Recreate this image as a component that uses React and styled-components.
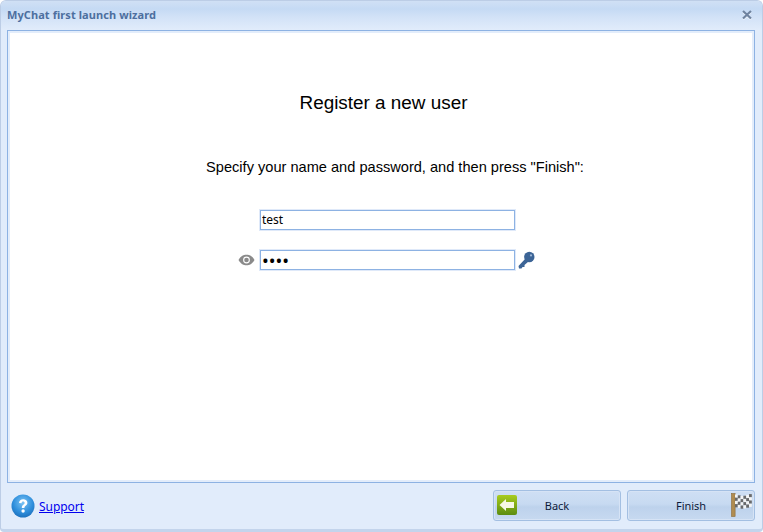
import React from "react";
import styled, { createGlobalStyle } from "styled-components";

const Global = createGlobalStyle`
  html, body { margin: 0; padding: 0; width: 763px; height: 532px; overflow: hidden; background: #fff; }
  #root { width: 763px; height: 532px; }
`;

const Window = styled.div`
  box-sizing: border-box;
  width: 763px;
  height: 532px;
  display: flex;
  flex-direction: column;
  background: #e1ecfb;
  border: 1px solid #bccde6;
  border-bottom: 3px solid #c3d4ec;
  border-radius: 6px 6px 4px 4px;
  padding: 0 7px 0 6px;
  overflow: hidden;
`;

const TitleBar = styled.div`
  height: 29px;
  margin: 0 -7px 0 -6px;
  padding: 0 10px 0 6px;
  flex: none;
  display: flex;
  align-items: flex-start;
  justify-content: space-between;
  background: linear-gradient(#d0e0f5 0, #c5daf4 8px, #d2e2f7 16px, #e1ecfb 29px);
`;

const Title = styled.span`
  margin-top: 7px;
  font: bold 11px/14px "Noto Sans", "DejaVu Sans", sans-serif;
  letter-spacing: 0.08px;
  color: #4d6f9f;
`;

const CloseIcon = styled.svg`
  width: 10px;
  height: 10px;
  margin-top: 9px;
  display: block;
`;

const Panel = styled.main`
  flex: none;
  box-sizing: border-box;
  height: 453px;
  background: #fff;
  border: 1px solid #8db2e3;
  box-shadow: inset 0 0 0 2px #e3edfb;
  display: flex;
  flex-direction: column;
  align-items: center;
  padding-top: 61px;
`;

const Heading = styled.h1`
  margin: 0 0 0 5px;
  font: 400 18.9px/22px "Liberation Sans", Arial, sans-serif;
  color: #000;
`;

const Prompt = styled.p`
  margin: 44px 0 0 28px;
  font: 400 14.6px/18px "Liberation Sans", Arial, sans-serif;
  color: #000;
`;

const Form = styled.div`
  margin: 34px 0 0 13px;
  display: flex;
  flex-direction: column;
  gap: 20px;
`;

const FieldRow = styled.div`
  position: relative;
  width: 255px;
  height: 20px;
`;

const Input = styled.input`
  box-sizing: border-box;
  width: 255px;
  height: 20px;
  display: block;
  padding: 0 1px 1px;
  margin: 0;
  border: 1px solid #8db2e3;
  border-radius: 0;
  outline: none;
  box-shadow: 0 0 0 1px #dfe9f9;
  background: #fff;
  color: #000;
  font: 400 ${(p) => (p.type === "password" ? "18px" : "12px")}/17px "Noto Sans", "DejaVu Sans", sans-serif;
`;

const SideIcon = styled.svg`
  position: absolute;
  top: 1px;
  display: block;
  ${(p) => (p.$side === "left" ? "left: -22px;" : "right: -21px;")}
`;

const Footer = styled.footer`
  flex: 1;
  display: flex;
  align-items: flex-start;
  justify-content: space-between;
  padding-top: 7px;
`;

const SupportWrap = styled.div`
  display: flex;
  align-items: center;
  gap: 4px;
  margin: 4px 0 0 4px;
`;

const SupportLink = styled.a`
  margin-top: 2px;
  font: 400 12px/16px "Noto Sans", "DejaVu Sans", sans-serif;
  letter-spacing: -0.05px;
  color: #0000ee;
  text-decoration: underline;
  cursor: pointer;
`;

const Buttons = styled.div`
  display: flex;
  gap: 6px;
`;

const Button = styled.button`
  position: relative;
  box-sizing: border-box;
  width: 128px;
  height: 31px;
  padding: 0;
  border: 1px solid #a3bfe2;
  border-radius: 3px;
  background: linear-gradient(#cfdff4 0, #c7daf1 45%, #bdd2ec 55%, #c7d9f0 100%);
  box-shadow: inset 0 0 0 1px #d6e3f5;
  font: 400 11px/29px "Noto Sans", "DejaVu Sans", sans-serif;
  letter-spacing: -0.05px;
  color: #0c1a3a;
  text-align: center;
`;

const ButtonIcon = styled.svg`
  position: absolute;
  display: block;
  top: ${(p) => p.$top}px;
  ${(p) => (p.$side === "left" ? `left: ${p.$inset}px;` : `right: ${p.$inset}px;`)}
`;

const FlagSquares = () => {
  const cells = [];
  const wave = [0, 0.8, 1.4, 1.2, 0.4, -0.4];
  for (let r = 0; r < 4; r++) {
    for (let c = 0; c < 6; c++) {
      cells.push(
        <rect
          key={`${r}-${c}`}
          x={4 + c * 2.8}
          y={1.5 + r * 3.2 + wave[c]}
          width="2.8"
          height="3.2"
          fill={(r + c) % 2 ? "#6a6a6a" : "#f4f4f4"}
        />
      );
    }
  }
  return cells;
};

export default function App() {
  return (
    <Window>
      <Global />
      <TitleBar>
        <Title>MyChat first launch wizard</Title>
        <CloseIcon viewBox="0 0 10 10">
          <path d="M1 2 L9 9.5 M9 2 L1 9.5" stroke="#fff" strokeWidth="2" fill="none" opacity="0.7" />
          <path d="M1 1 L9 8.5 M9 1 L1 8.5" stroke="#6f839f" strokeWidth="2.2" fill="none" />
        </CloseIcon>
      </TitleBar>
      <Panel>
        <Heading>Register a new user</Heading>
        <Prompt>Specify your name and password, and then press "Finish":</Prompt>
        <Form>
          <FieldRow>
            <Input type="text" defaultValue="test" />
          </FieldRow>
          <FieldRow>
            <SideIcon $side="left" width="17" height="18" viewBox="0 0 17 18">
              <path d="M0.5 9 C3 4.8 5.5 3.8 8.5 3.8 C11.5 3.8 14 4.8 16.5 9 C14 13.2 11.5 14.2 8.5 14.2 C5.5 14.2 3 13.2 0.5 9 Z" fill="#8a8a8a" />
              <circle cx="8.5" cy="9" r="3.4" fill="#fff" />
              <circle cx="8.5" cy="9" r="2.3" fill="#8a8a8a" />
            </SideIcon>
            <Input type="password" defaultValue="test" />
            <SideIcon $side="right" width="18" height="18" viewBox="0 0 18 18">
              <path d="M0.5 15 L7.5 7.5 L10.5 10.5 L6.5 14 L6.5 16 L4.5 16 L3.5 17.5 L1 17.5 Z" fill="#3c6496" />
              <circle cx="11.3" cy="6" r="5.2" fill="#3c6496" />
              <circle cx="13" cy="4.4" r="1.1" fill="#9db6d6" />
            </SideIcon>
          </FieldRow>
        </Form>
      </Panel>
      <Footer>
        <SupportWrap>
          <svg width="24" height="24" viewBox="0 0 24 24">
            <defs>
              <radialGradient id="helpBall" cx="50%" cy="35%" r="70%">
                <stop offset="0" stopColor="#7cc4f4" />
                <stop offset="0.6" stopColor="#2f8fdc" />
                <stop offset="1" stopColor="#1a6cb8" />
              </radialGradient>
            </defs>
            <circle cx="12" cy="12" r="11.5" fill="url(#helpBall)" />
            <path d="M8 9 C8 6.5 10 5.2 12.2 5.2 C14.6 5.2 16.4 6.6 16.4 8.8 C16.4 11.6 13.4 11.6 13.4 14 L10.8 14 C10.8 10.6 13.6 10.6 13.6 9 C13.6 8.2 13 7.6 12.1 7.6 C11.2 7.6 10.6 8.2 10.6 9.2 Z" fill="#fff" />
            <circle cx="12.1" cy="17" r="1.7" fill="#fff" />
          </svg>
          <SupportLink href="#">Support</SupportLink>
        </SupportWrap>
        <Buttons>
          <Button>
            <ButtonIcon $side="left" $inset={3} $top={4} width="20" height="20" viewBox="0 0 20 20">
              <defs>
                <linearGradient id="backGreen" x1="0" y1="0" x2="0" y2="1">
                  <stop offset="0" stopColor="#a8cc1e" />
                  <stop offset="1" stopColor="#5c8c10" />
                </linearGradient>
              </defs>
              <rect width="20" height="20" rx="2" fill="url(#backGreen)" />
              <path d="M2.5 10 L9 4 L9 7 L17 7 L17 13 L9 13 L9 16 Z" fill="#f6f8e6" />
            </ButtonIcon>
            Back
          </Button>
          <Button>
            Finish
            <ButtonIcon $side="right" $inset={2} $top={2} width="21" height="24" viewBox="0 0 21 24">
              <rect x="0.5" y="0.5" width="3.6" height="23" fill="#b08c50" stroke="#8a6a38" strokeWidth="0.6" />
              <FlagSquares />
            </ButtonIcon>
          </Button>
        </Buttons>
      </Footer>
    </Window>
  );
}
